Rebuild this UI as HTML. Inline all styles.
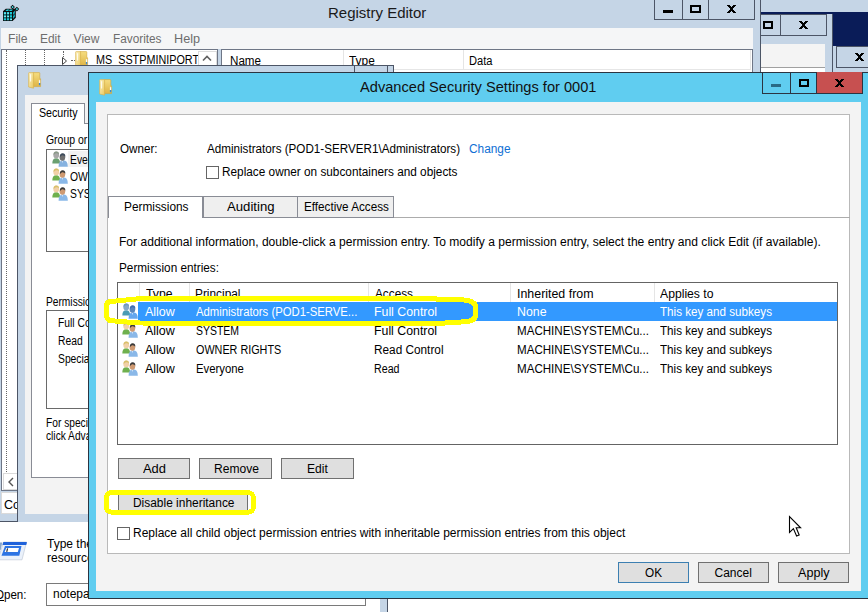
<!DOCTYPE html>
<html><head><meta charset="utf-8">
<style>
*{margin:0;padding:0;box-sizing:border-box}
html,body{width:868px;height:612px;overflow:hidden;background:#fff;font-family:"Liberation Sans",sans-serif;font-size:12px;color:#000}
.a{position:absolute}
.t{position:absolute;white-space:nowrap;transform-origin:0 0}
</style></head><body>
<div class="a" style="left:0px;top:0px;width:760px;height:522px;background:#c5d5e6;"></div>
<div class="a" style="left:0px;top:521px;width:760px;height:1px;background:#4c5566;"></div>
<div class="t" style="left:328px;top:5px;font-size:15px;line-height:15px;color:#1a1a1a;">Registry Editor</div>
<svg class="a" style="left:0px;top:0px" width="22" height="24" viewBox="0 0 22 24">
 <path d="M3 11.3 L5.8 8.8 H15.8 V17.8 L12.6 21 H3 Z" fill="#0c0c0c"/>
 <path d="M3.8 12h2.3v2.4h-2.3zM6.9 12h2.3v2.4h-2.3zM10 12h2v2.4h-2zM3.8 15.2h2.3v2.4h-2.3zM6.9 15.2h2.3v2.4h-2.3zM10 15.2h2v2.4h-2zM3.8 18.3h2.3v2h-2.3zM6.9 18.3h2.3v2h-2.3zM10 18.3h2v2h-2z" fill="#1ccbd8"/>
 <path d="M4.5 12.8h1v1h-1zM7.6 12.8h1v1h-1zM4.5 16h1v1h-1zM7.6 16h1v1h-1zM10.6 18.9h1v1h-1z" fill="#e8ffff"/>
 <path d="M5.3 10.9 L6.9 9.5 H9.6 L8 10.9Z M8.8 10.9 L10.4 9.5 H13.2 L11.6 10.9Z" fill="#1ccbd8"/>
 <path d="M13 12.5 L14.9 10.6 V13.2 L13 15.1Z M13 16 L14.9 14.1 V16.8 L13 18.7Z" fill="#17a9b8"/>
 <path d="M10.3 7.1 L12.6 4.8 L14.9 7.1 L12.6 9.4Z M14.6 9.1 L16.9 6.8 L19.2 9.1 L16.9 11.4Z" fill="#0c0c0c"/>
 <path d="M11.4 7.1 L12.6 5.9 L13.8 7.1 L12.6 8.3Z M15.7 9.1 L16.9 7.9 L18.1 9.1 L16.9 10.3Z" fill="#3fe3ee"/>
</svg>
<div class="a" style="left:654px;top:-1px;width:101px;height:21px;border:1px solid #4c5566;"></div>
<div class="a" style="left:682px;top:0px;width:1px;height:19px;background:#4c5566;"></div>
<div class="a" style="left:708px;top:0px;width:1px;height:19px;background:#4c5566;"></div>
<div class="a" style="left:663px;top:10px;width:10px;height:3px;background:#000;"></div>
<div class="a" style="left:690px;top:5px;width:11px;height:8px;border:2px solid #000;"></div>
<svg class="a" style="left:727px;top:5px" width="9" height="8" shape-rendering="crispEdges"><path d="M0 0h3v1h-3zM6 0h3v1h-3zM1 1h3v1h-3zM5 1h3v1h-3zM2 2h5v1h-5zM3 3h3v2h-3zM2 5h5v1h-5zM1 6h3v1h-3zM5 6h3v1h-3zM0 7h3v1h-3zM6 7h3v1h-3z" fill="#000"/></svg>
<div class="a" style="left:1px;top:28px;width:752px;height:21px;background:#f5f6f7;"></div>
<div class="t" style="left:7.8px;top:33px;font-size:12px;line-height:12px;color:#6d6d6d;transform:scaleX(1.0085);">File</div>
<div class="t" style="left:40px;top:33px;font-size:12px;line-height:12px;color:#6d6d6d;transform:scaleX(0.9914);">Edit</div>
<div class="t" style="left:73.6px;top:33px;font-size:12px;line-height:12px;color:#6d6d6d;">View</div>
<div class="t" style="left:112.6px;top:33px;font-size:12px;line-height:12px;color:#6d6d6d;transform:scaleX(0.9828);">Favorites</div>
<div class="t" style="left:173.8px;top:33px;font-size:12px;line-height:12px;color:#6d6d6d;transform:scaleX(1.0535);">Help</div>
<div class="a" style="left:1px;top:49px;width:217px;height:442px;background:#fff;border:1px solid #6e7686;"></div>
<div class="a" style="left:6px;top:50px;width:1px;height:422px;border-left:1px dotted #666"></div>
<div class="a" style="left:25px;top:50px;width:1px;height:15px;border-left:1px dotted #666"></div>
<div class="a" style="left:44px;top:50px;width:1px;height:15px;border-left:1px dotted #666"></div>
<div class="a" style="left:63px;top:51px;width:1px;height:6px;border-left:1px dotted #666"></div>
<svg class="a" style="left:61px;top:56px" width="8" height="10"><path d="M1.5 1.5 L5.5 5 L1.5 8.5 Z" fill="#fff" stroke="#444"/></svg>
<div class="a" style="left:71px;top:60px;width:4px;height:1px;border-top:1px dotted #666"></div>
<svg class="a" style="left:75px;top:51px" width="14" height="17" viewBox="0 0 14 17">
<defs><linearGradient id="fb1" x1="0" y1="0" x2="0" y2="1"><stop offset="0" stop-color="#f6dd80"/><stop offset="1" stop-color="#deb446"/></linearGradient>
<linearGradient id="ff1" x1="0" y1="0" x2="1" y2="1"><stop offset="0" stop-color="#fdf2c0"/><stop offset="1" stop-color="#e9c85e"/></linearGradient></defs>
<path d="M5 0.6 H11.2 Q11.8 0.6 11.8 1.2 V6.8 H12.6 V14.6 H5 Z" fill="url(#fb1)" stroke="#d2a63a" stroke-width="0.6"/>
<path d="M0.6 1.2 Q0.6 0.6 1.2 0.6 H5.6 V16.2 L0.6 15 Z" fill="url(#ff1)" stroke="#d7ae48" stroke-width="0.6"/>
<path d="M2.6 2.2 V9.5" stroke="#fff" stroke-width="1.1" opacity="0.85"/>
<rect x="10.9" y="8.2" width="1.3" height="2.8" fill="#f4f8ff"/>
<rect x="10.9" y="11" width="1.3" height="2.2" fill="#3b8ad8"/>
</svg>
<div class="t" style="left:95.5px;top:54px;font-size:12px;line-height:12px;transform:scaleX(0.8999);">MS_SSTPMINIPORT</div>
<div class="a" style="left:198px;top:51px;width:19px;height:16px;background:#fff;border:1px solid #dcdcdc;"></div>
<svg class="a" style="left:201px;top:54px" width="12" height="8"><path d="M2 6.5 L6 2.5 L10 6.5" fill="none" stroke="#606060" stroke-width="1.6"/></svg>
<div class="a" style="left:3px;top:473px;width:15px;height:17px;background:#fff;border:1px solid #dadada;"></div>
<svg class="a" style="left:7px;top:477px" width="8" height="10"><path d="M6 1 L2 5 L6 9" fill="none" stroke="#555" stroke-width="1.4"/></svg>
<div class="a" style="left:1px;top:492px;width:17px;height:22px;background:#fff;border:1px solid #dadada;"></div>
<div class="t" style="left:3.5px;top:499px;font-size:12px;line-height:12px;transform:scaleX(1.0430);">Co</div>
<div class="a" style="left:221px;top:49px;width:532px;height:473px;background:#fff;border:1px solid #6e7686;"></div>
<div class="a" style="left:222px;top:50px;width:529px;height:20px;border-right:1px solid #e6e6e6;border-bottom:1px solid #e6e6e6"></div>
<div class="t" style="left:229.7px;top:55px;font-size:12px;line-height:12px;transform:scaleX(0.9685);">Name</div>
<div class="a" style="left:343px;top:50px;width:1px;height:20px;background:#e5e5e5;"></div>
<div class="t" style="left:349.4px;top:55px;font-size:12px;line-height:12px;transform:scaleX(0.9917);">Type</div>
<div class="a" style="left:463px;top:50px;width:1px;height:20px;background:#e5e5e5;"></div>
<div class="t" style="left:469.2px;top:55px;font-size:12px;line-height:12px;transform:scaleX(0.9271);">Data</div>
<div class="a" style="left:760px;top:0px;width:108px;height:72px;background:#c5d5e6;"></div>
<div class="a" style="left:760px;top:0px;width:1px;height:72px;background:#4c5566;"></div>
<div class="a" style="left:761px;top:12px;width:107px;height:2px;background:#0a1c58;"></div>
<div class="a" style="left:833px;top:12px;width:35px;height:34px;background:#0a1c58;"></div>
<div class="a" style="left:760px;top:14px;width:67px;height:22px;border:1px solid #4c5566;"></div>
<div class="a" style="left:780px;top:15px;width:1px;height:20px;background:#4c5566;"></div>
<div class="a" style="left:763px;top:21px;width:10px;height:8px;border:2px solid #000;"></div>
<svg class="a" style="left:799px;top:21px" width="9" height="8" shape-rendering="crispEdges"><path d="M0 0h3v1h-3zM6 0h3v1h-3zM1 1h3v1h-3zM5 1h3v1h-3zM2 2h5v1h-5zM3 3h3v2h-3zM2 5h5v1h-5zM1 6h3v1h-3zM5 6h3v1h-3zM0 7h3v1h-3zM6 7h3v1h-3z" fill="#000"/></svg>
<div class="a" style="left:761px;top:44px;width:64px;height:24px;background:#f4f4f4;border-bottom:1px solid #a0a0a0"></div>
<div class="a" style="left:761px;top:68px;width:64px;height:4px;background:#fff;"></div>
<div class="a" style="left:832px;top:14px;width:1px;height:58px;background:#4c5566;"></div>
<div class="a" style="left:836px;top:46px;width:40px;height:22px;border:1px solid #4c5566;"></div>
<svg class="a" style="left:855px;top:53px" width="9" height="8" shape-rendering="crispEdges"><path d="M0 0h3v1h-3zM6 0h3v1h-3zM1 1h3v1h-3zM5 1h3v1h-3zM2 2h5v1h-5zM3 3h3v2h-3zM2 5h5v1h-5zM1 6h3v1h-3zM5 6h3v1h-3zM0 7h3v1h-3zM6 7h3v1h-3z" fill="#000"/></svg>
<div class="a" style="left:17px;top:65px;width:377px;height:457px;background:#c5d5e6;border:1px solid #4c5566;border-bottom:none"></div>
<div class="a" style="left:354px;top:65px;width:1px;height:7px;background:#4c5566;"></div>
<div class="a" style="left:387px;top:65px;width:1px;height:7px;background:#4c5566;"></div>
<svg class="a" style="left:28px;top:72px" width="14" height="17" viewBox="0 0 14 17">
<defs><linearGradient id="fb2" x1="0" y1="0" x2="0" y2="1"><stop offset="0" stop-color="#f6dd80"/><stop offset="1" stop-color="#deb446"/></linearGradient>
<linearGradient id="ff2" x1="0" y1="0" x2="1" y2="1"><stop offset="0" stop-color="#fdf2c0"/><stop offset="1" stop-color="#e9c85e"/></linearGradient></defs>
<path d="M5 0.6 H11.2 Q11.8 0.6 11.8 1.2 V6.8 H12.6 V14.6 H5 Z" fill="url(#fb2)" stroke="#d2a63a" stroke-width="0.6"/>
<path d="M0.6 1.2 Q0.6 0.6 1.2 0.6 H5.6 V16.2 L0.6 15 Z" fill="url(#ff2)" stroke="#d7ae48" stroke-width="0.6"/>
<path d="M2.6 2.2 V9.5" stroke="#fff" stroke-width="1.1" opacity="0.85"/>
<rect x="10.9" y="8.2" width="1.3" height="2.8" fill="#f4f8ff"/>
<rect x="10.9" y="11" width="1.3" height="2.2" fill="#3b8ad8"/>
</svg>
<div class="a" style="left:25px;top:95px;width:360px;height:419px;background:#f3f3f3;"></div>
<div class="a" style="left:31px;top:123px;width:340px;height:355px;background:#fff;border:1px solid #898c95;"></div>
<div class="a" style="left:31px;top:103px;width:54px;height:21px;background:#fff;border:1px solid #898c95;border-bottom:none"></div>
<div class="t" style="left:38.6px;top:107px;font-size:12px;line-height:12px;transform:scaleX(0.8882);">Security</div>
<div class="t" style="left:45.6px;top:134px;font-size:12px;line-height:12px;transform:scaleX(0.8700);">Group or user names:</div>
<div class="a" style="left:46px;top:149px;width:60px;height:103px;background:#fff;border:1px solid #6a6a6a;"></div>
<div class="a" style="left:68px;top:151px;width:20px;height:16px;background:#f2f2f2;"></div>
<svg class="a" style="left:52px;top:151px" width="16" height="16" viewBox="0 0 16 16">
<path d="M0.3 12.5 Q0.3 7.3 4.2 7.3 Q8 7.3 8.2 12.5 Z" fill="#6aa070"/>
<ellipse cx="4.2" cy="3.9" rx="2.9" ry="3.4" fill="#a8a8a8"/>
<path d="M1.6 4 Q1.5 0.5 4.3 0.5 Q7.1 0.5 7 3.5 Q5.5 1.8 3.3 2.6 Z" fill="#8a9a88"/>
<path d="M6.6 15.7 Q6.6 9.3 11.2 9.3 Q15.8 9.3 15.8 15.7 Z" fill="#86b2e0"/>
<ellipse cx="10.4" cy="6.2" rx="2.8" ry="3.5" fill="#6f6f6f"/>
<path d="M7.9 6 Q7.8 2.3 10.7 2.3 Q13.6 2.3 13.3 5.8 Q12.5 4 10 4.3 Z" fill="#3c4a5a"/>
<path d="M9.6 10 L10.4 12 L11.2 10Z" fill="#fff" opacity="0.6"/>
</svg>
<div class="t" style="left:70px;top:154px;font-size:12px;line-height:12px;transform:scaleX(0.8600);">Everyone</div>
<svg class="a" style="left:52px;top:168px" width="16" height="16" viewBox="0 0 16 16">
<path d="M0.3 12.5 Q0.3 7.3 4.2 7.3 Q8 7.3 8.2 12.5 Z" fill="#6fb04e"/>
<ellipse cx="4.2" cy="3.9" rx="2.9" ry="3.4" fill="#f1d0a8"/>
<path d="M1.6 4 Q1.5 0.5 4.3 0.5 Q7.1 0.5 7 3.5 Q5.5 1.8 3.3 2.6 Z" fill="#d8c06a"/>
<path d="M6.6 15.7 Q6.6 9.3 11.2 9.3 Q15.8 9.3 15.8 15.7 Z" fill="#8ab8e8"/>
<ellipse cx="10.4" cy="6.2" rx="2.8" ry="3.5" fill="#cf9a72"/>
<path d="M7.9 6 Q7.8 2.3 10.7 2.3 Q13.6 2.3 13.3 5.8 Q12.5 4 10 4.3 Z" fill="#3a3a3a"/>
<path d="M9.6 10 L10.4 12 L11.2 10Z" fill="#fff" opacity="0.6"/>
</svg>
<div class="t" style="left:70px;top:171px;font-size:12px;line-height:12px;transform:scaleX(0.8600);">OWNER RIGHTS</div>
<svg class="a" style="left:52px;top:185px" width="16" height="16" viewBox="0 0 16 16">
<path d="M0.3 12.5 Q0.3 7.3 4.2 7.3 Q8 7.3 8.2 12.5 Z" fill="#6fb04e"/>
<ellipse cx="4.2" cy="3.9" rx="2.9" ry="3.4" fill="#f1d0a8"/>
<path d="M1.6 4 Q1.5 0.5 4.3 0.5 Q7.1 0.5 7 3.5 Q5.5 1.8 3.3 2.6 Z" fill="#d8c06a"/>
<path d="M6.6 15.7 Q6.6 9.3 11.2 9.3 Q15.8 9.3 15.8 15.7 Z" fill="#8ab8e8"/>
<ellipse cx="10.4" cy="6.2" rx="2.8" ry="3.5" fill="#cf9a72"/>
<path d="M7.9 6 Q7.8 2.3 10.7 2.3 Q13.6 2.3 13.3 5.8 Q12.5 4 10 4.3 Z" fill="#3a3a3a"/>
<path d="M9.6 10 L10.4 12 L11.2 10Z" fill="#fff" opacity="0.6"/>
</svg>
<div class="t" style="left:70px;top:188px;font-size:12px;line-height:12px;transform:scaleX(0.8600);">SYSTEM</div>
<div class="t" style="left:46px;top:296px;font-size:12px;line-height:12px;transform:scaleX(0.8500);">Permissions for Everyone</div>
<div class="a" style="left:46px;top:310px;width:60px;height:99px;background:#fff;border:1px solid #6a6a6a;"></div>
<div class="t" style="left:58.3px;top:317px;font-size:12px;line-height:12px;transform:scaleX(0.8600);">Full Control</div>
<div class="t" style="left:58.3px;top:335px;font-size:12px;line-height:12px;transform:scaleX(0.8600);">Read</div>
<div class="t" style="left:58.3px;top:353px;font-size:12px;line-height:12px;transform:scaleX(0.8600);">Special permissions</div>
<div class="t" style="left:46px;top:417px;font-size:12px;line-height:12px;transform:scaleX(0.8500);">For special permissions</div>
<div class="t" style="left:46px;top:430px;font-size:12px;line-height:12px;transform:scaleX(0.8500);">click Advanced.</div>
<div class="a" style="left:0px;top:522px;width:380px;height:90px;background:#fff;"></div>
<div class="a" style="left:380px;top:522px;width:7px;height:90px;background:#c5d5e6;"></div>
<div class="a" style="left:387px;top:522px;width:1px;height:90px;background:#4c5566;"></div>
<svg class="a" style="left:0px;top:541px" width="28" height="20" viewBox="0 0 28 20">
<path d="M3.5 1 H26.5 L22 18.8 H-2 Z" fill="#eaf1fb" stroke="#b8c2d0" stroke-width="0.6"/>
<path d="M3.3 1 H26.5 Q27 1.2 26.8 2 L26.2 4 H2.5 Z" fill="#1f62da"/>
<path d="M5 5 H21.5 L19.3 14.7 H1.5 Z" fill="#2d74e4"/>
<path d="M6.2 7 H19 L17.8 11 H4.6 Z" fill="#fff"/>
<path d="M7.6 7.4 L6.7 10.8" stroke="#333" stroke-width="1.2"/>
<path d="M0 1.5 H2.3 L0.6 9 H0Z" fill="#8aa6c8"/>
</svg>
<div class="t" style="left:47px;top:538px;font-size:12px;line-height:12px;">Type the name of a program, folder, document, or Internet</div>
<div class="t" style="left:47px;top:552px;font-size:12px;line-height:12px;">resource, and Windows will open it for you.</div>
<div class="t" style="left:-5.5px;top:589px;font-size:12px;line-height:12px;transform:scaleX(0.9636);">Open:</div>
<div class="a" style="left:0px;top:600px;width:4px;height:1px;background:#000;"></div>
<div class="a" style="left:46px;top:583px;width:320px;height:23px;background:#fff;border:1px solid #7a7a7a;"></div>
<div class="t" style="left:53px;top:588px;font-size:12px;line-height:12px;">notepad</div>
<div class="a" style="left:88px;top:72px;width:790px;height:527px;background:#60cdf0;border:1px solid #2b3441;"></div>
<svg class="a" style="left:99px;top:79px" width="14" height="17" viewBox="0 0 14 17">
<defs><linearGradient id="fb3" x1="0" y1="0" x2="0" y2="1"><stop offset="0" stop-color="#f6dd80"/><stop offset="1" stop-color="#deb446"/></linearGradient>
<linearGradient id="ff3" x1="0" y1="0" x2="1" y2="1"><stop offset="0" stop-color="#fdf2c0"/><stop offset="1" stop-color="#e9c85e"/></linearGradient></defs>
<path d="M5 0.6 H11.2 Q11.8 0.6 11.8 1.2 V6.8 H12.6 V14.6 H5 Z" fill="url(#fb3)" stroke="#d2a63a" stroke-width="0.6"/>
<path d="M0.6 1.2 Q0.6 0.6 1.2 0.6 H5.6 V16.2 L0.6 15 Z" fill="url(#ff3)" stroke="#d7ae48" stroke-width="0.6"/>
<path d="M2.6 2.2 V9.5" stroke="#fff" stroke-width="1.1" opacity="0.85"/>
<rect x="10.9" y="8.2" width="1.3" height="2.8" fill="#f4f8ff"/>
<rect x="10.9" y="11" width="1.3" height="2.2" fill="#3b8ad8"/>
</svg>
<div class="t" style="left:359.5px;top:79px;font-size:15px;line-height:15px;color:#111;transform:scaleX(0.9747);">Advanced Security Settings for 0001</div>
<div class="a" style="left:762px;top:72px;width:101px;height:22px;border:1px solid #2b3441;border-top:none"></div>
<div class="a" style="left:790px;top:72px;width:1px;height:22px;background:#2b3441;"></div>
<div class="a" style="left:816px;top:72px;width:47px;height:22px;background:#c75050;border:1px solid #2b3441;border-top:none"></div>
<div class="a" style="left:771px;top:84px;width:10px;height:3px;background:#2a6a85;"></div>
<div class="a" style="left:799px;top:79px;width:10px;height:8px;border:2px solid #000;"></div>
<svg class="a" style="left:835px;top:79px" width="9" height="8" shape-rendering="crispEdges"><path d="M0 0h3v1h-3zM6 0h3v1h-3zM1 1h3v1h-3zM5 1h3v1h-3zM2 2h5v1h-5zM3 3h3v2h-3zM2 5h5v1h-5zM1 6h3v1h-3zM5 6h3v1h-3zM0 7h3v1h-3zM6 7h3v1h-3z" fill="#000"/></svg>
<div class="a" style="left:96px;top:102px;width:765px;height:489px;background:#f3f3f3;"></div>
<div class="a" style="left:107px;top:114px;width:743px;height:440px;background:#fff;border:1px solid #b9b9b9;"></div>
<div class="t" style="left:119.5px;top:143px;font-size:12px;line-height:12px;transform:scaleX(0.9696);">Owner:</div>
<div class="t" style="left:207px;top:143px;font-size:12px;line-height:12px;transform:scaleX(0.9712);">Administrators (POD1-SERVER1\Administrators)</div>
<div class="t" style="left:469px;top:143px;font-size:12px;line-height:12px;color:#0f6fd4;transform:scaleX(0.9873);">Change</div>
<div class="a" style="left:206px;top:166px;width:13px;height:13px;background:#fff;border:1px solid #656565;"></div>
<div class="t" style="left:221.5px;top:166px;font-size:12px;line-height:12px;transform:scaleX(0.9834);">Replace owner on subcontainers and objects</div>
<div class="a" style="left:108px;top:217px;width:742px;height:1px;background:#acacac;"></div>
<div class="a" style="left:203px;top:196px;width:95px;height:22px;background:#efefef;border:1px solid #898c95;"></div>
<div class="a" style="left:297px;top:196px;width:97px;height:22px;background:#efefef;border:1px solid #898c95;"></div>
<div class="a" style="left:108px;top:196px;width:95px;height:22px;background:#fff;border:1px solid #898c95;border-bottom:none"></div>
<div class="t" style="left:123.5px;top:201px;font-size:12px;line-height:12px;transform:scaleX(0.9870);">Permissions</div>
<div class="t" style="left:226.8px;top:201px;font-size:12px;line-height:12px;transform:scaleX(1.0953);">Auditing</div>
<div class="t" style="left:303.5px;top:201px;font-size:12px;line-height:12px;transform:scaleX(0.9736);">Effective Access</div>
<div class="t" style="left:118.5px;top:236px;font-size:12px;line-height:12px;transform:scaleX(1.0059);">For additional information, double-click a permission entry. To modify a permission entry, select the entry and click Edit (if available).</div>
<div class="t" style="left:118.5px;top:262px;font-size:12px;line-height:12px;transform:scaleX(0.9801);">Permission entries:</div>
<div class="a" style="left:117px;top:282px;width:721px;height:163px;background:#fff;border:1px solid #646464;"></div>
<div class="a" style="left:139px;top:283px;width:1px;height:19px;background:#e5e5e5;"></div>
<div class="a" style="left:189px;top:283px;width:1px;height:19px;background:#e5e5e5;"></div>
<div class="a" style="left:368px;top:283px;width:1px;height:19px;background:#e5e5e5;"></div>
<div class="a" style="left:510px;top:283px;width:1px;height:19px;background:#e5e5e5;"></div>
<div class="a" style="left:654px;top:283px;width:1px;height:19px;background:#e5e5e5;"></div>
<div class="t" style="left:146px;top:288px;font-size:12px;line-height:12px;transform:scaleX(1.0186);">Type</div>
<div class="t" style="left:194.8px;top:288px;font-size:12px;line-height:12px;transform:scaleX(0.9887);">Principal</div>
<div class="t" style="left:374.5px;top:288px;font-size:12px;line-height:12px;transform:scaleX(0.9825);">Access</div>
<div class="t" style="left:516.5px;top:288px;font-size:12px;line-height:12px;transform:scaleX(1.0333);">Inherited from</div>
<div class="t" style="left:660px;top:288px;font-size:12px;line-height:12px;transform:scaleX(1.0152);">Applies to</div>
<div class="a" style="left:138px;top:302px;width:699px;height:19px;background:#3399ff;"></div>
<svg class="a" style="left:122px;top:303px" width="16" height="16" viewBox="0 0 16 16">
<path d="M0.3 12.5 Q0.3 7.3 4.2 7.3 Q8 7.3 8.2 12.5 Z" fill="#4a9cb4"/>
<ellipse cx="4.2" cy="3.9" rx="2.9" ry="3.4" fill="#86a8c8"/>
<path d="M1.6 4 Q1.5 0.5 4.3 0.5 Q7.1 0.5 7 3.5 Q5.5 1.8 3.3 2.6 Z" fill="#6f98bf"/>
<path d="M6.6 15.7 Q6.6 9.3 11.2 9.3 Q15.8 9.3 15.8 15.7 Z" fill="#64a6ee"/>
<ellipse cx="10.4" cy="6.2" rx="2.8" ry="3.5" fill="#5a86bc"/>
<path d="M7.9 6 Q7.8 2.3 10.7 2.3 Q13.6 2.3 13.3 5.8 Q12.5 4 10 4.3 Z" fill="#3f6fb0"/>
<path d="M9.6 10 L10.4 12 L11.2 10Z" fill="#fff" opacity="0.6"/>
</svg>
<div class="t" style="left:145.3px;top:306px;font-size:12px;line-height:12px;color:#fff;transform:scaleX(1.0392);">Allow</div>
<div class="t" style="left:195.5px;top:306px;font-size:12px;line-height:12px;color:#fff;transform:scaleX(0.9424);">Administrators (POD1-SERVE...</div>
<div class="t" style="left:374px;top:306px;font-size:12px;line-height:12px;color:#fff;transform:scaleX(1.0268);">Full Control</div>
<div class="t" style="left:516.5px;top:306px;font-size:12px;line-height:12px;color:#fff;transform:scaleX(1.0283);">None</div>
<div class="t" style="left:660px;top:306px;font-size:12px;line-height:12px;color:#fff;transform:scaleX(0.9706);">This key and subkeys</div>
<svg class="a" style="left:122px;top:322px" width="16" height="16" viewBox="0 0 16 16">
<path d="M0.3 12.5 Q0.3 7.3 4.2 7.3 Q8 7.3 8.2 12.5 Z" fill="#6fb04e"/>
<ellipse cx="4.2" cy="3.9" rx="2.9" ry="3.4" fill="#f1d0a8"/>
<path d="M1.6 4 Q1.5 0.5 4.3 0.5 Q7.1 0.5 7 3.5 Q5.5 1.8 3.3 2.6 Z" fill="#d8c06a"/>
<path d="M6.6 15.7 Q6.6 9.3 11.2 9.3 Q15.8 9.3 15.8 15.7 Z" fill="#8ab8e8"/>
<ellipse cx="10.4" cy="6.2" rx="2.8" ry="3.5" fill="#cf9a72"/>
<path d="M7.9 6 Q7.8 2.3 10.7 2.3 Q13.6 2.3 13.3 5.8 Q12.5 4 10 4.3 Z" fill="#3a3a3a"/>
<path d="M9.6 10 L10.4 12 L11.2 10Z" fill="#fff" opacity="0.6"/>
</svg>
<div class="t" style="left:145.3px;top:325px;font-size:12px;line-height:12px;transform:scaleX(1.0392);">Allow</div>
<div class="t" style="left:195.5px;top:325px;font-size:12px;line-height:12px;transform:scaleX(0.8715);">SYSTEM</div>
<div class="t" style="left:374px;top:325px;font-size:12px;line-height:12px;transform:scaleX(1.0268);">Full Control</div>
<div class="t" style="left:516.5px;top:325px;font-size:12px;line-height:12px;transform:scaleX(0.9657);">MACHINE\SYSTEM\Cu...</div>
<div class="t" style="left:660px;top:325px;font-size:12px;line-height:12px;transform:scaleX(0.9706);">This key and subkeys</div>
<svg class="a" style="left:122px;top:341px" width="16" height="16" viewBox="0 0 16 16">
<path d="M0.3 12.5 Q0.3 7.3 4.2 7.3 Q8 7.3 8.2 12.5 Z" fill="#6fb04e"/>
<ellipse cx="4.2" cy="3.9" rx="2.9" ry="3.4" fill="#f1d0a8"/>
<path d="M1.6 4 Q1.5 0.5 4.3 0.5 Q7.1 0.5 7 3.5 Q5.5 1.8 3.3 2.6 Z" fill="#d8c06a"/>
<path d="M6.6 15.7 Q6.6 9.3 11.2 9.3 Q15.8 9.3 15.8 15.7 Z" fill="#8ab8e8"/>
<ellipse cx="10.4" cy="6.2" rx="2.8" ry="3.5" fill="#cf9a72"/>
<path d="M7.9 6 Q7.8 2.3 10.7 2.3 Q13.6 2.3 13.3 5.8 Q12.5 4 10 4.3 Z" fill="#3a3a3a"/>
<path d="M9.6 10 L10.4 12 L11.2 10Z" fill="#fff" opacity="0.6"/>
</svg>
<div class="t" style="left:145.3px;top:344px;font-size:12px;line-height:12px;transform:scaleX(1.0392);">Allow</div>
<div class="t" style="left:195.5px;top:344px;font-size:12px;line-height:12px;transform:scaleX(0.9000);">OWNER RIGHTS</div>
<div class="t" style="left:374px;top:344px;font-size:12px;line-height:12px;transform:scaleX(0.9830);">Read Control</div>
<div class="t" style="left:516.5px;top:344px;font-size:12px;line-height:12px;transform:scaleX(0.9657);">MACHINE\SYSTEM\Cu...</div>
<div class="t" style="left:660px;top:344px;font-size:12px;line-height:12px;transform:scaleX(0.9706);">This key and subkeys</div>
<svg class="a" style="left:122px;top:360px" width="16" height="16" viewBox="0 0 16 16">
<path d="M0.3 12.5 Q0.3 7.3 4.2 7.3 Q8 7.3 8.2 12.5 Z" fill="#6fb04e"/>
<ellipse cx="4.2" cy="3.9" rx="2.9" ry="3.4" fill="#f1d0a8"/>
<path d="M1.6 4 Q1.5 0.5 4.3 0.5 Q7.1 0.5 7 3.5 Q5.5 1.8 3.3 2.6 Z" fill="#d8c06a"/>
<path d="M6.6 15.7 Q6.6 9.3 11.2 9.3 Q15.8 9.3 15.8 15.7 Z" fill="#8ab8e8"/>
<ellipse cx="10.4" cy="6.2" rx="2.8" ry="3.5" fill="#cf9a72"/>
<path d="M7.9 6 Q7.8 2.3 10.7 2.3 Q13.6 2.3 13.3 5.8 Q12.5 4 10 4.3 Z" fill="#3a3a3a"/>
<path d="M9.6 10 L10.4 12 L11.2 10Z" fill="#fff" opacity="0.6"/>
</svg>
<div class="t" style="left:145.3px;top:363px;font-size:12px;line-height:12px;transform:scaleX(1.0392);">Allow</div>
<div class="t" style="left:195.5px;top:363px;font-size:12px;line-height:12px;transform:scaleX(0.9449);">Everyone</div>
<div class="t" style="left:374px;top:363px;font-size:12px;line-height:12px;transform:scaleX(0.8889);">Read</div>
<div class="t" style="left:516.5px;top:363px;font-size:12px;line-height:12px;transform:scaleX(0.9657);">MACHINE\SYSTEM\Cu...</div>
<div class="t" style="left:660px;top:363px;font-size:12px;line-height:12px;transform:scaleX(0.9706);">This key and subkeys</div>
<div class="a" style="left:118px;top:458px;width:72px;height:21px;background:#dfdfdf;border:1px solid #707070;"></div>
<div class="t" style="left:142.8px;top:463px;font-size:12px;line-height:12px;transform:scaleX(1.0772);">Add</div>
<div class="a" style="left:199px;top:458px;width:73px;height:21px;background:#dfdfdf;border:1px solid #707070;"></div>
<div class="t" style="left:213.6px;top:463px;font-size:12px;line-height:12px;transform:scaleX(1.0071);">Remove</div>
<div class="a" style="left:281px;top:458px;width:73px;height:21px;background:#dfdfdf;border:1px solid #707070;"></div>
<div class="t" style="left:306.8px;top:463px;font-size:12px;line-height:12px;transform:scaleX(1.0059);">Edit</div>
<div class="a" style="left:118px;top:493px;width:130px;height:18px;background:#dfdfdf;border:1px solid #707070;"></div>
<div class="t" style="left:132.5px;top:497px;font-size:12px;line-height:12px;transform:scaleX(0.9945);">Disable inheritance</div>
<div class="a" style="left:117px;top:527px;width:13px;height:13px;background:#fff;border:1px solid #656565;"></div>
<div class="t" style="left:133px;top:527px;font-size:12px;line-height:12px;">Replace all child object permission entries with inheritable permission entries from this object</div>
<div class="a" style="left:618px;top:562px;width:71px;height:21px;background:#dfdfdf;border:1px solid #3c7fb1;"></div>
<div class="t" style="left:645.2px;top:567px;font-size:12px;line-height:12px;transform:scaleX(0.9805);">OK</div>
<div class="a" style="left:698px;top:562px;width:71px;height:21px;background:#dfdfdf;border:1px solid #707070;"></div>
<div class="t" style="left:714.5px;top:567px;font-size:12px;line-height:12px;">Cancel</div>
<div class="a" style="left:778px;top:562px;width:71px;height:21px;background:#dfdfdf;border:1px solid #707070;"></div>
<div class="t" style="left:797.8px;top:567px;font-size:12px;line-height:12px;transform:scaleX(1.0494);">Apply</div>
<svg class="a" style="left:785px;top:512px" width="20" height="28"><path d="M4.5 4.5 V20.5 L8.4 16.6 L11.6 24 L14.2 23 L11.2 15.8 L15.6 15.8 Z" fill="#fff" stroke="#000" stroke-width="1.1" stroke-linejoin="miter"/></svg>
<svg class="a" style="left:0;top:0" width="868" height="612" shape-rendering="crispEdges">
<path d="M106.5 306 Q106.5 301.8 110.5 301.6 L138 298.8 L420 298.5 L462 299.8 Q475.5 300.5 475.5 307 L475.5 315 Q475.5 321.2 464 321.8 L440 323.3 L290 323.7 L140 323 L112 320.8 Q106.5 320.5 106.5 315 Z" fill="none" stroke="#ffff00" stroke-width="5"/>
<rect x="106.5" y="492.6" width="146.8" height="19.6" rx="5" ry="5" fill="none" stroke="#ffff00" stroke-width="5"/>
</svg>
</body></html>
